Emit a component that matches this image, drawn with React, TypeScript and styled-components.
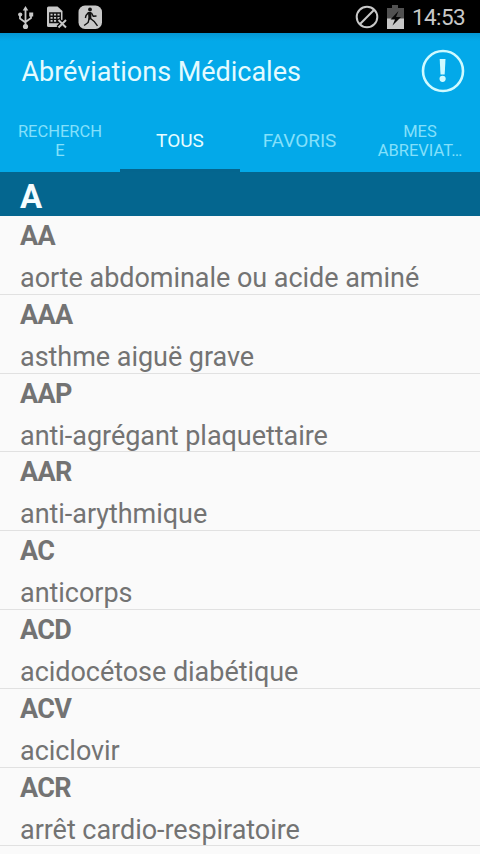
import React from "react";
import styled, { createGlobalStyle } from "styled-components";

const GlobalStyle = createGlobalStyle`
  * { box-sizing: border-box; }
  body { margin: 0; background: #fafafa; font-family: Roboto, "Liberation Sans", sans-serif; overflow: hidden; }
`;

const Screen = styled.div`
  display: flex;
  flex-direction: column;
  width: 480px;
  height: 854px;
  overflow: hidden;
  background: #fafafa;
`;

const StatusBar = styled.div`
  flex: none;
  display: flex;
  align-items: center;
  justify-content: space-between;
  height: 33px;
  padding: 1px 15px 0 16px;
  background: #000;
  color: #c8c8c8;
`;

const StatusGroup = styled.div<{ $gap: number }>`
  display: flex;
  align-items: center;
  gap: ${(p) => p.$gap}px;
  svg { display: block; }
`;

const Clock = styled.span`
  font-size: 22.5px;
  line-height: 32px;
  letter-spacing: -0.6px;
`;

const AppBar = styled.header`
  flex: none;
  display: flex;
  align-items: center;
  justify-content: space-between;
  height: 76px;
  padding: 0 15px 0 21.5px;
  background: linear-gradient(#0596d3, #03a9e9 8px);
`;

const Title = styled.h1`
  margin: 0;
  padding-top: 2px;
  font-size: 27px;
  font-weight: 400;
  line-height: 36px;
  letter-spacing: -0.02px;
  color: #e4fbff;
`;

const Tabs = styled.nav`
  flex: none;
  display: grid;
  grid-template-columns: repeat(4, 120px);
  height: 63px;
  background: #03a9e9;
`;

const Tab = styled.div<{ $active?: boolean; $small?: boolean }>`
  display: flex;
  flex-direction: column;
  align-items: center;
  justify-content: center;
  padding-top: ${(p) => (p.$active ? 3 : p.$small ? 2 : 0)}px;
  padding-right: ${(p) => (p.$small || p.$active ? 0 : 1)}px;
  border-bottom: ${(p) => (p.$active ? "3px solid #04658e" : "0")};
  font-size: ${(p) => (p.$small ? 16.5 : 19)}px;
  line-height: ${(p) => (p.$small ? 18.5 : 22)}px;
  color: ${(p) => (p.$active ? "#e6fdff" : "#84e0fb")};
`;

const SectionHeader = styled.div`
  flex: none;
  height: 44px;
  padding: 4px 20px 0;
  background: #04668f;
  color: #f4fdff;
  font-size: 33px;
  font-weight: 700;
  line-height: 42px;
`;

const Entry = styled.div`
  flex: none;
  height: 78.8px;
  padding: 4px 20px 0;
  border-bottom: 1px solid #e1e1e1;
  color: #737373;
  font-size: 27px;
  white-space: nowrap;
`;

const Code = styled.div`
  height: 42px;
  line-height: 32px;
  font-weight: 700;
  letter-spacing: -0.7px;
`;

const Meaning = styled.div`
  line-height: 33px;
  letter-spacing: -0.04px;
`;

const entries: [string, string][] = [
  ["AA", "aorte abdominale ou acide aminé"],
  ["AAA", "asthme aiguë grave"],
  ["AAP", "anti-agrégant plaquettaire"],
  ["AAR", "anti-arythmique"],
  ["AC", "anticorps"],
  ["ACD", "acidocétose diabétique"],
  ["ACV", "aciclovir"],
  ["ACR", "arrêt cardio-respiratoire"],
];

const UsbIcon = () => (
  <svg width="19" height="25" viewBox="0 0 19 25" fill="#c8c8c8">
    <path d="M9.5 4v17M4 10v3.500l5.500 4M15 10v3l-5.500 4" fill="none" stroke="#c8c8c8" strokeWidth="1.800" />
    <path d="M9.5 1l2.800 4.500H6.700zM13.200 7.500h4v4h-4z" />
    <circle cx="4.200" cy="9.500" r="2.100" />
    <circle cx="9.500" cy="21.500" r="2.600" />
  </svg>
);

const SimIcon = () => (
  <svg width="22" height="24" viewBox="0 0 22 24">
    <path d="M1 3q0-1.500 1.500-1.500H11.500l5 4.500V22H2.500Q1 22 1 20.500z" fill="#c8c8c8" />
    <path d="M3.800 8h10.500v9.500H3.800zM4 11.200h10M4 14.400h10M7.300 8v9.500M10.800 8v9.500" fill="none" stroke="#111" strokeWidth="1.400" />
    <path d="M12 14.500l8 8M20 14.500l-8 8" stroke="#000" strokeWidth="4.200" />
    <path d="M12.500 15l7.500 7.500M20 15l-7.500 7.500" stroke="#c8c8c8" strokeWidth="2" />
  </svg>
);

const RunnerIcon = () => (
  <svg width="25" height="25" viewBox="0 0 25 25">
    <rect x="0.500" y="0.500" width="23.500" height="23.500" rx="6.500" fill="#c8c8c8" />
    <circle cx="12" cy="4.500" r="1.900" fill="#111" />
    <path d="M10 7h3.500l-.2 7-2.800 1z" fill="#111" />
    <path d="M10.500 7.500L8 10.500l-.6 2.500M13.500 8l1.800 3.300 3.200-.3M11.300 13l-1.200 4.500-4 3M12.500 13.500l4 3.300 3 4" fill="none" stroke="#111" strokeWidth="1.400" strokeLinejoin="round" />
  </svg>
);

const BlockedIcon = () => (
  <svg width="24" height="24" viewBox="0 0 24 24" fill="none" stroke="#c8c8c8" strokeWidth="2">
    <circle cx="12" cy="12" r="10.300" />
    <path d="M4.800 19.200L19.200 4.800" />
  </svg>
);

const BatteryIcon = () => (
  <svg width="17" height="25" viewBox="0 0 17 25">
    <path d="M0 3h5V0h6v3h6v11H0z" fill="#515151" />
    <path d="M0 13.500h17V24H0z" fill="#c8c8c8" />
    <path d="M11.500 6L3.500 14.500h4.500L5.500 20.500 14 12H9z" fill="#080808" />
  </svg>
);

const AlertIcon = () => (
  <svg width="44" height="44" viewBox="0 0 44 44" fill="#cffaff">
    <circle cx="22" cy="22" r="20" fill="none" stroke="#cffaff" strokeWidth="2.600" />
    <path d="M18.700 10h5.800l-.8 15.500h-4.200z" />
    <circle cx="21.600" cy="29.800" r="3.100" />
  </svg>
);

export default function App() {
  return (
    <Screen>
      <GlobalStyle />
      <StatusBar>
        <StatusGroup $gap={10.5}>
          <UsbIcon />
          <SimIcon />
          <RunnerIcon />
        </StatusGroup>
        <StatusGroup $gap={8}>
          <BlockedIcon />
          <BatteryIcon />
          <Clock>14:53</Clock>
        </StatusGroup>
      </StatusBar>
      <AppBar>
        <Title>Abréviations Médicales</Title>
        <AlertIcon />
      </AppBar>
      <Tabs>
        <Tab $small><span>RECHERCH</span><span>E</span></Tab>
        <Tab $active>TOUS</Tab>
        <Tab>FAVORIS</Tab>
        <Tab $small><span>MES</span><span>ABREVIAT…</span></Tab>
      </Tabs>
      <SectionHeader>A</SectionHeader>
      {entries.map(([code, meaning]) => (
        <Entry key={code}>
          <Code>{code}</Code>
          <Meaning>{meaning}</Meaning>
        </Entry>
      ))}
    </Screen>
  );
}
